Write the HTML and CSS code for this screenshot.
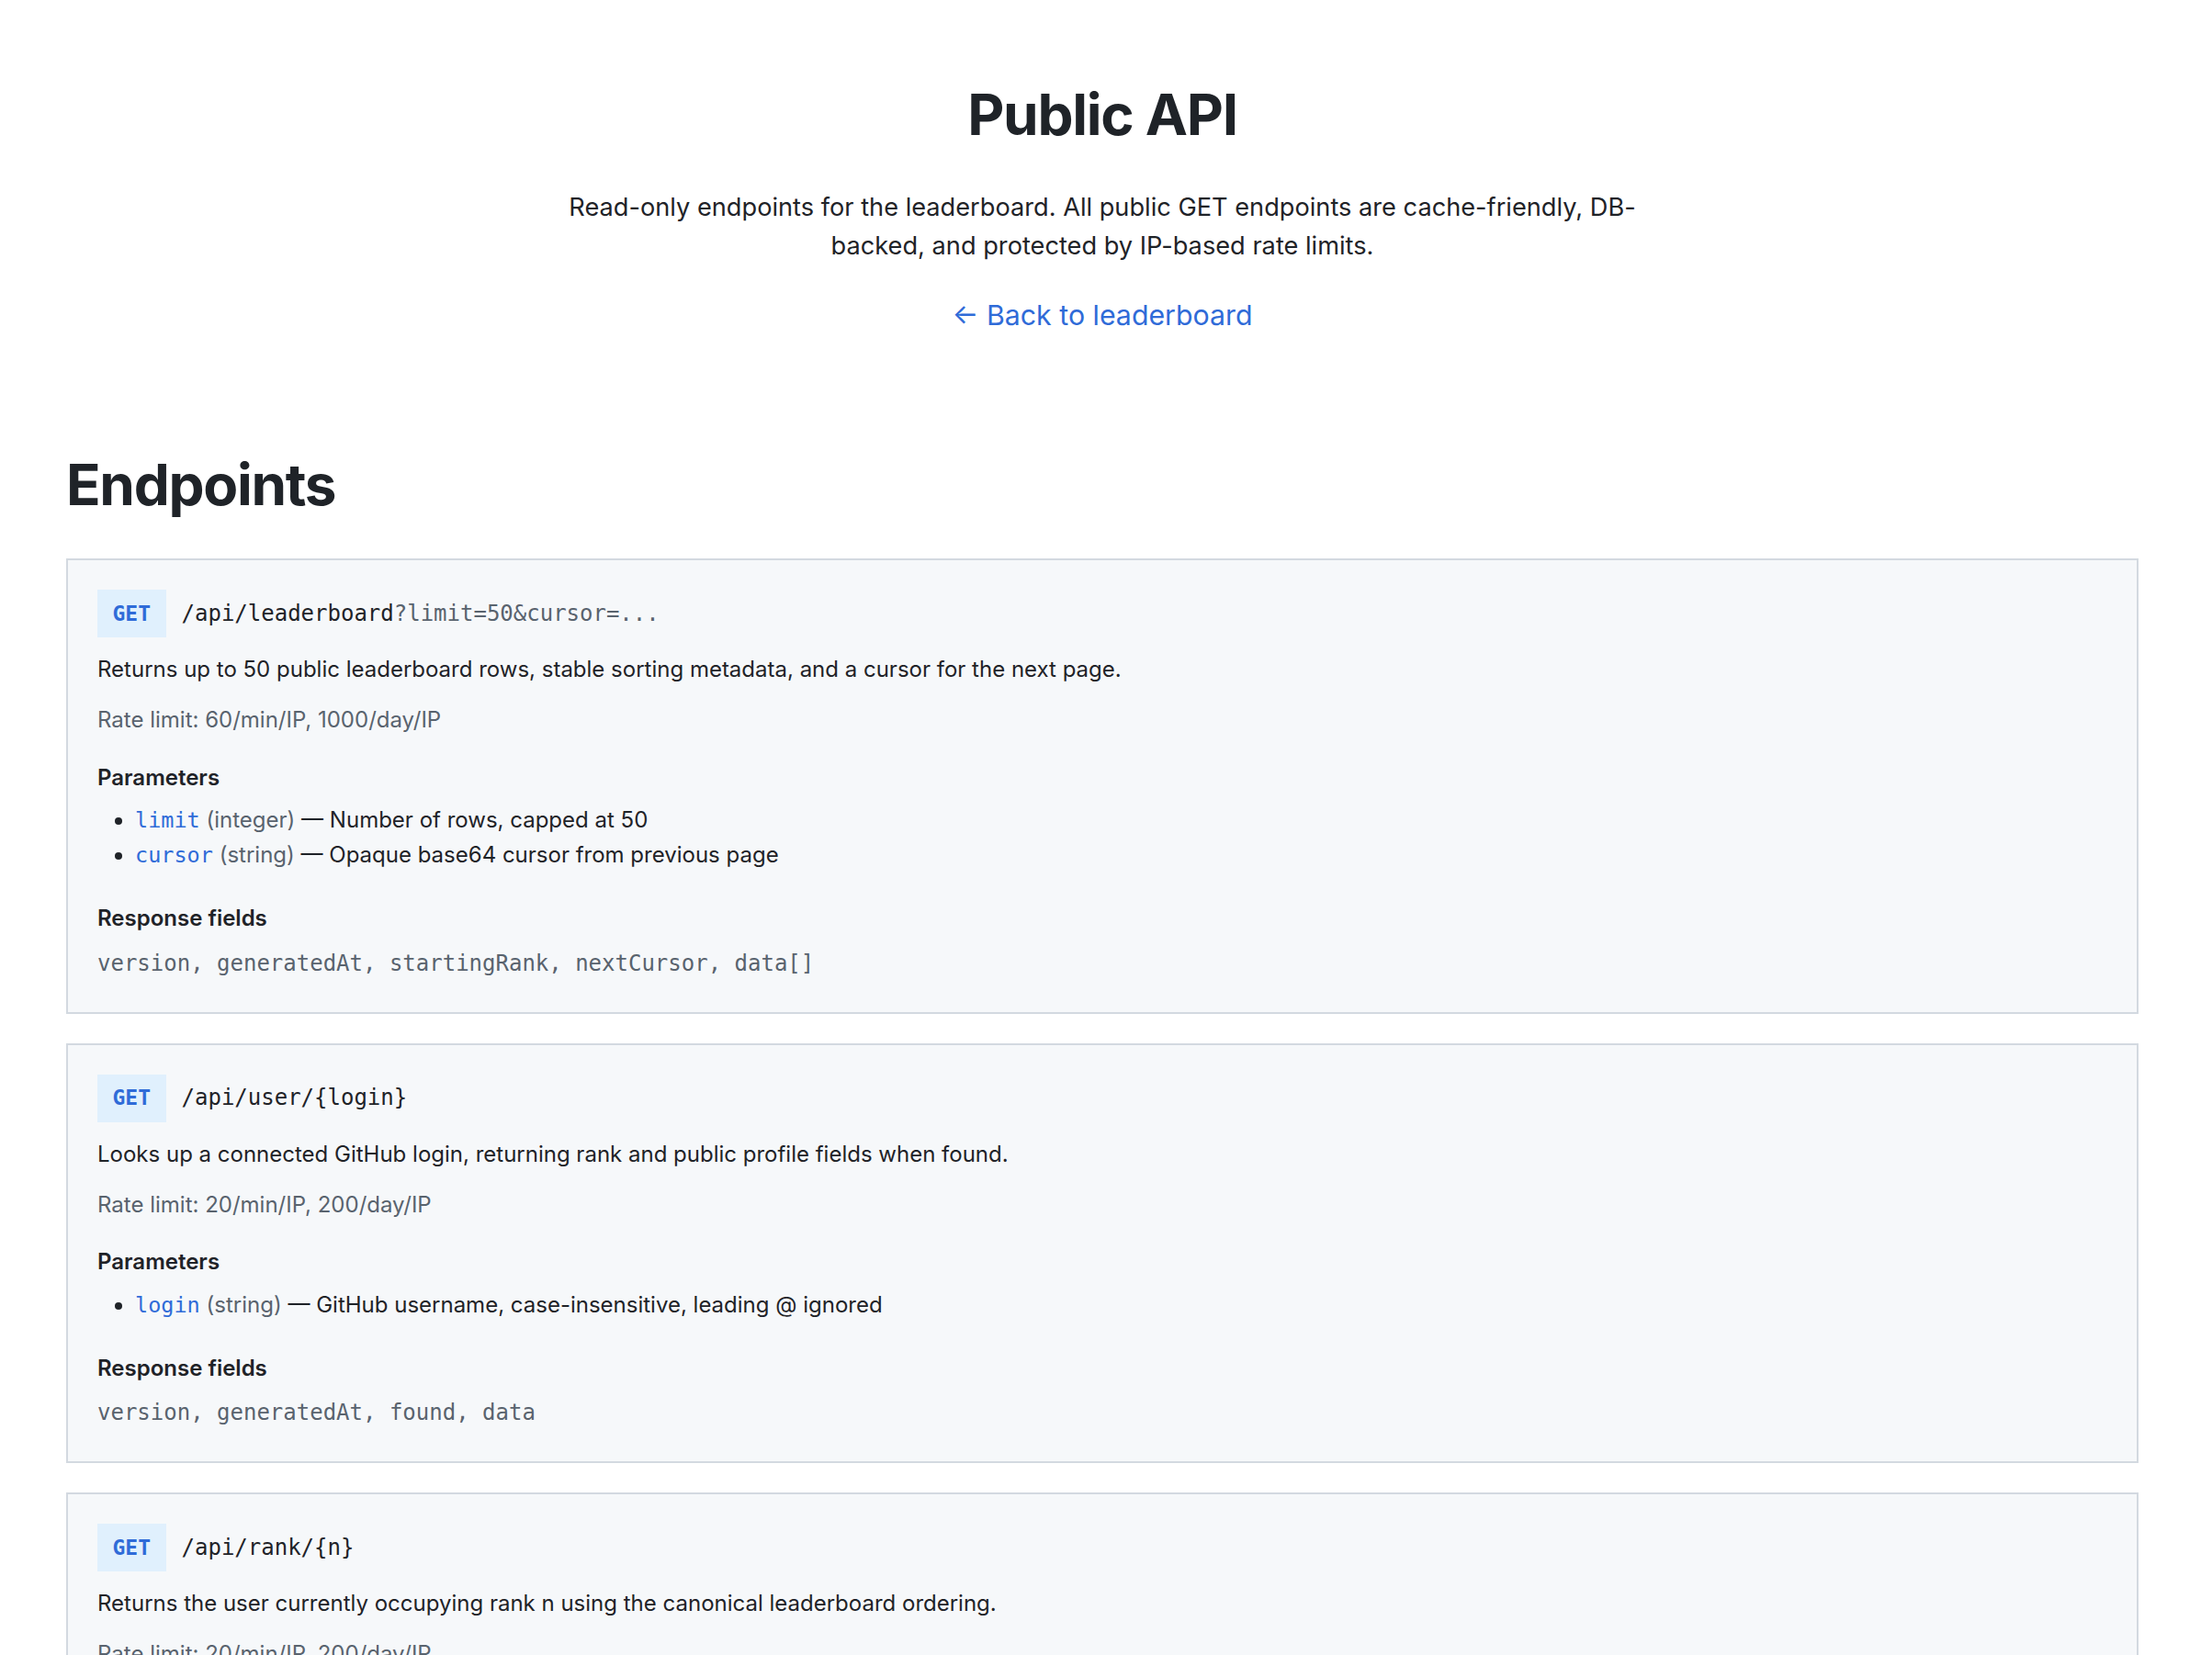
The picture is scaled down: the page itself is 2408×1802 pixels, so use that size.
FILE: index.html
```html
<!DOCTYPE html>
<html lang="en">
<head>
<meta charset="utf-8">
<title>Public API</title>
<link rel="stylesheet" href="styles.css">
</head>
<body>
<main class="page">
  <header class="intro">
    <h1 class="title">Public API</h1>
    <p class="lead">Read-only endpoints for the leaderboard. All public GET endpoints are cache-friendly, DB-backed, and protected by IP-based rate limits.</p>
    <a class="back" href="#">← Back to leaderboard</a>
  </header>

  <section class="endpoints">
    <h2 class="section-title">Endpoints</h2>

    <article class="card">
      <div class="head"><span class="method">GET</span><code class="path">/api/leaderboard<span class="query">?limit=50&amp;cursor=...</span></code></div>
      <p class="desc">Returns up to 50 public leaderboard rows, stable sorting metadata, and a cursor for the next page.</p>
      <p class="rate">Rate limit: 60/min/IP, 1000/day/IP</p>
      <h3 class="label">Parameters</h3>
      <ul class="params">
        <li><code class="pname">limit</code> <span class="ptype">(integer)</span> — Number of rows, capped at 50</li>
        <li><code class="pname">cursor</code> <span class="ptype">(string)</span> — Opaque base64 cursor from previous page</li>
      </ul>
      <h3 class="label">Response fields</h3>
      <p class="fields">version, generatedAt, startingRank, nextCursor, data[]</p>
    </article>

    <article class="card">
      <div class="head"><span class="method">GET</span><code class="path">/api/user/{login}</code></div>
      <p class="desc">Looks up a connected GitHub login, returning rank and public profile fields when found.</p>
      <p class="rate">Rate limit: 20/min/IP, 200/day/IP</p>
      <h3 class="label">Parameters</h3>
      <ul class="params">
        <li><code class="pname">login</code> <span class="ptype">(string)</span> — GitHub username, case-insensitive, leading @ ignored</li>
      </ul>
      <h3 class="label">Response fields</h3>
      <p class="fields">version, generatedAt, found, data</p>
    </article>

    <article class="card">
      <div class="head"><span class="method">GET</span><code class="path">/api/rank/{n}</code></div>
      <p class="desc">Returns the user currently occupying rank n using the canonical leaderboard ordering.</p>
      <p class="rate">Rate limit: 20/min/IP, 200/day/IP</p>
      <h3 class="label">Parameters</h3>
      <ul class="params">
        <li><code class="pname">n</code> <span class="ptype">(integer)</span> — 1-based rank position</li>
      </ul>
      <h3 class="label">Response fields</h3>
      <p class="fields">version, generatedAt, found, data</p>
    </article>
  </section>
</main>
</body>
</html>
```

FILE: styles.css
```css
* { box-sizing: border-box; }

html, body {
  margin: 0;
  background: #ffffff;
}

body {
  font-family: "Inter", "Noto Sans", sans-serif;
  font-size: 24px;
  line-height: 38.4px;
  color: #1f2328;
}

.page {
  padding: 87px 80px 60px 72px;
}

.intro {
  display: flex;
  flex-direction: column;
  align-items: center;
  text-align: center;
}

.title {
  margin: 0;
  font-size: 62px;
  line-height: 76.8px;
  font-weight: 700;
  letter-spacing: -1.3px;
}

.lead {
  margin: 41px 0 0;
  max-width: 1195px;
  font-size: 27.2px;
  line-height: 41.8px;
}

.back {
  margin-top: 33px;
  font-size: 30.3px;
  line-height: 45px;
  color: #2f6bd8;
  text-decoration: none;
}

.section-title {
  margin: 125px 0 42px;
  font-size: 62px;
  line-height: 74.4px;
  font-weight: 700;
  letter-spacing: -1.3px;
}

.card {
  background: #f6f8fa;
  border: 2px solid #d3d9e0;
  padding: 32px 32px 33.5px;
  margin-bottom: 32px;
}

.head {
  display: flex;
  align-items: center;
  gap: 17px;
  height: 52px;
}

.method {
  display: flex;
  align-items: center;
  height: 52px;
  padding: 0 16.5px;
  background: #e0f0fd;
  color: #2f6bd8;
  font-family: "DejaVu Sans Mono", monospace;
  font-weight: 700;
  font-size: 23px;
}

.path {
  font-family: "DejaVu Sans Mono", monospace;
  font-size: 24px;
  color: #1f2328;
}

.query { color: #59636e; }

.desc {
  margin: 16px 0 0;
}

.rate {
  margin: 16.5px 0 0;
  color: #59636e;
}

.label {
  margin: 24.5px 0 0;
  font-size: 24px;
  line-height: 38.4px;
  font-weight: 600;
}

.params {
  margin: 8px 0 0;
  padding-left: 41px;
}

.pname {
  font-family: "DejaVu Sans Mono", monospace;
  font-size: 23.5px;
  color: #2f6bd8;
}

.ptype { color: #59636e; }

.params + .label { margin-top: 30.5px; }

.fields {
  margin: 10px 0 0;
  font-family: "DejaVu Sans Mono", monospace;
  font-size: 24px;
  color: #59636e;
}
```
